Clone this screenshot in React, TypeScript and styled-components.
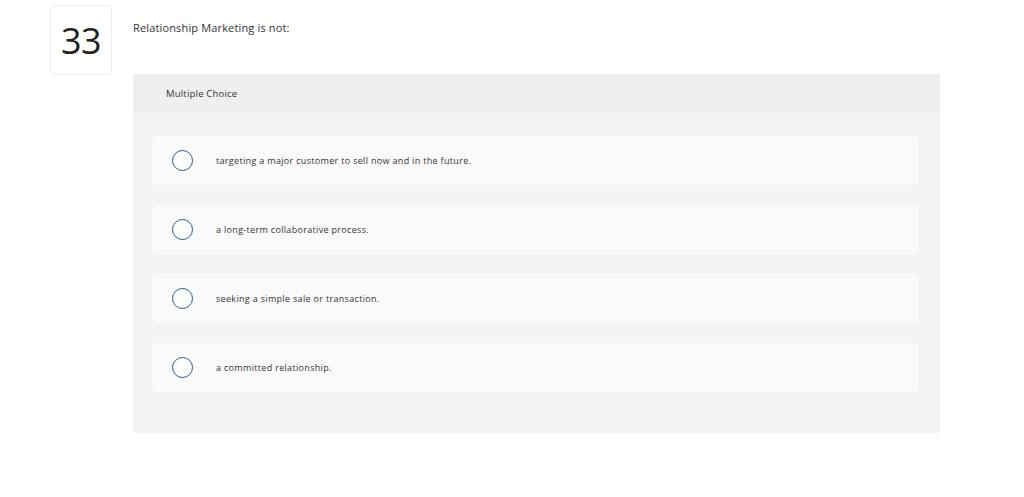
import React from 'react';
import styled, { createGlobalStyle } from 'styled-components';

const GlobalStyle = createGlobalStyle`
  html, body {
    margin: 0;
    padding: 0;
    background: #ffffff;
  }
  body {
    font-family: 'Open Sans', 'Liberation Sans', sans-serif;
    color: #333333;
  }
`;

const Page = styled.div`
  display: flex;
  align-items: flex-start;
  gap: 21px;
  padding: 5px 0 0 50px;
  width: 1024px;
  height: 497px;
  box-sizing: border-box;
`;

const NumberBox = styled.div`
  width: 62px;
  height: 70px;
  box-sizing: border-box;
  border: 1px solid #ececec;
  border-radius: 4px;
  display: flex;
  align-items: center;
  justify-content: center;
  font-size: 36px;
  color: #222222;
  font-weight: 400;
  letter-spacing: -0.5px;
`;

const Body = styled.div`
  display: flex;
  flex-direction: column;
  width: 807px;
`;

const Prompt = styled.div`
  font-size: 11px;
  line-height: 16px;
  color: #333333;
  padding-top: 15px;
  height: 69px;
  box-sizing: border-box;
  letter-spacing: 0.15px;
`;

const Panel = styled.div`
  background: #f4f4f4;
  border-radius: 2px;
  height: 359px;
  display: flex;
  flex-direction: column;
`;

const PanelHeader = styled.div`
  background: #efefef;
  height: 38px;
  display: flex;
  align-items: center;
  padding-left: 33px;
  font-size: 9.5px;
  color: #333333;
  letter-spacing: 0.2px;
  border-radius: 2px 2px 0 0;
`;

const Options = styled.div`
  display: flex;
  flex-direction: column;
  gap: 20px;
  padding: 24px 22px 0 20px;
`;

const Option = styled.label`
  display: flex;
  align-items: center;
  height: 49px;
  background: #fafafa;
  border-radius: 3px;
  padding-left: 19px;
  gap: 23px;
  cursor: pointer;
`;

const Radio = styled.span`
  width: 21px;
  height: 21px;
  box-sizing: border-box;
  border: 1.2px solid #235c96;
  border-radius: 50%;
  background: #ffffff;
  flex-shrink: 0;
`;

const OptionText = styled.span`
  font-size: 9px;
  color: #333333;
  letter-spacing: 0.32px;
`;

const choices = [
  'targeting a major customer to sell now and in the future.',
  'a long-term collaborative process.',
  'seeking a simple sale or transaction.',
  'a committed relationship.',
];

export default function App() {
  return (
    <>
      <GlobalStyle />
      <Page>
        <NumberBox>33</NumberBox>
        <Body>
          <Prompt>Relationship Marketing is not:</Prompt>
          <Panel>
            <PanelHeader>Multiple Choice</PanelHeader>
            <Options>
              {choices.map((c) => (
                <Option key={c}>
                  <Radio />
                  <OptionText>{c}</OptionText>
                </Option>
              ))}
            </Options>
          </Panel>
        </Body>
      </Page>
    </>
  );
}
